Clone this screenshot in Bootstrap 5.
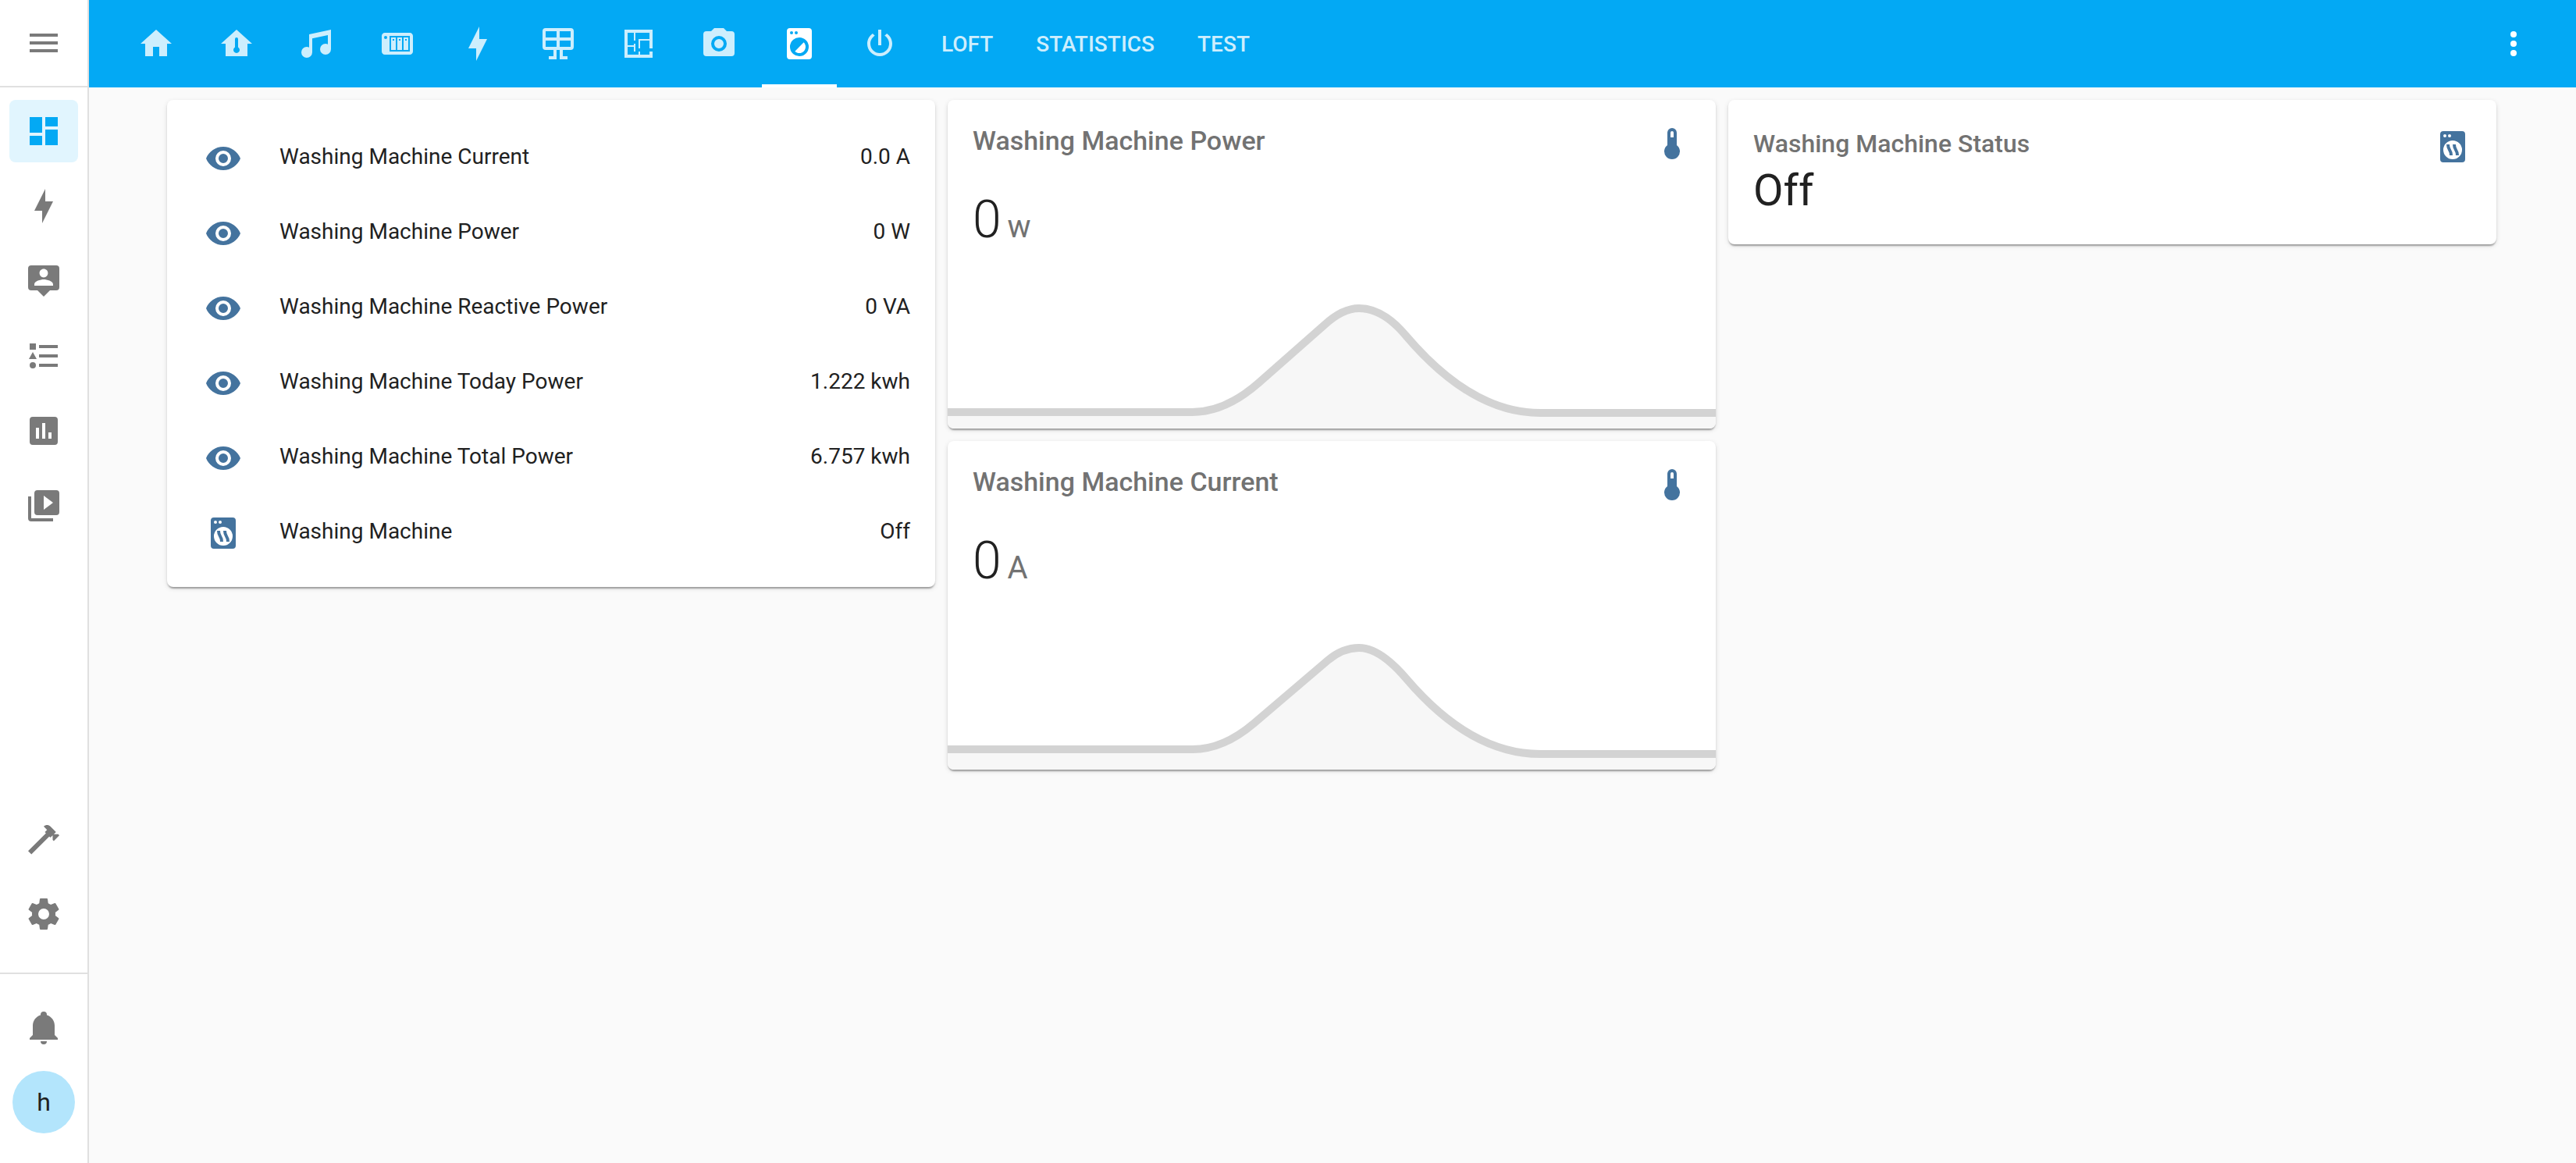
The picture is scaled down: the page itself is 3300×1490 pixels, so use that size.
<!DOCTYPE html>
<html lang="en">
<head>
<meta charset="utf-8">
<meta name="viewport" content="width=device-width, initial-scale=1">
<title>Washing Machine – Home Assistant</title>
<link href="https://cdn.jsdelivr.net/npm/bootstrap@5.3.0/dist/css/bootstrap.min.css" rel="stylesheet">
<style>
  :root { --accent: #03a9f4; --ink: #212121; --muted-ink: #727272; --line: #e0e0e0; --state: #44739e; }
  body { font-family: Roboto, "Noto Sans", sans-serif; font-size: 28px; line-height: 40px; color: var(--ink); background: #fafafa; }
  .ico { width: 48px; height: 48px; fill: currentColor; fill-rule: evenodd; flex: none; display: block; }
  .side { width: 114px; border-right: 2px solid var(--line); height: 100vh; color: #7a7a7a; }
  .side-head { height: 112px; border-bottom: 2px solid var(--line); }
  .side-list { padding: 16px 12px; gap: 16px; }
  .side-tools { padding-bottom: 35px; }
  .side-link { height: 80px; border-radius: 8px; color: inherit; }
  .side-link.active { background: #e1f5fe; color: var(--accent); }
  .side-foot { border-top: 2px solid var(--line); padding: 28px 12px 38px; gap: 16px; }
  .user-dot { width: 80px; height: 80px; background: #b3e5fc; color: var(--ink); font-size: 32px; }
  .topbar { height: 112px; background: var(--accent); padding: 0 56px 0 38px; }
  .tabs { gap: 7px; }
  .tab-link { height: 112px; padding: 4px 24px 0; border-bottom: 4px solid transparent; color: #cdeefd; font-weight: 500; text-decoration: none; }
  .tab-text { padding-top: 6px; }
  .plain-btn { background: none; border: 0; padding: 0; color: inherit; }
  .tab-link.active, .more-btn { color: #fff; }
  .tab-link.active { border-color: #fff; }
  .board { max-width: 3002px; padding: 16px 10px 16px 8px; gap: 16px; }
  .board-col { flex: 1 1 0; min-width: 0; gap: 16px; }
  .tile { border: 0; border-radius: 8px; overflow: hidden; color: var(--ink);
    box-shadow: 0 4px 2px -2px rgba(0,0,0,.2), 0 2px 2px 0 rgba(0,0,0,.14), 0 2px 6px 0 rgba(0,0,0,.12); }
  .entities { padding: 32px; gap: 16px; }
  .entity { height: 80px; padding-top: 2px; }
  .entity-ico { width: 80px; margin-right: 32px; padding-top: 4px; color: var(--state); }
  .sensor-head { padding: 32px 32px 0; }
  .tile-title { font-weight: 500; color: var(--muted-ink); font-size: 32px; line-height: 40px; margin: 0; }
  .sensor-head .tile-title { font-size: 34px; }
  .state-ico { color: var(--state); }
  .sensor-value { padding: 38px 32px 41px; font-size: 66px; line-height: 72px; font-weight: 300; }
  .sensor-unit { font-size: 40px; line-height: 40px; font-weight: 400; color: var(--muted-ink); margin-left: 8px; }
  .graph { display: block; width: 100%; height: auto; }
  .graph .area { fill: #f7f7f7; }
  .graph .trace { fill: none; stroke: #d3d3d3; stroke-width: 10; }
  .status { padding: 36px 32px 37px; }
  .status-value { font-size: 56px; line-height: 64px; margin-top: 8px; }
</style>
<script src="https://cdn.jsdelivr.net/npm/bootstrap@5.3.0/dist/js/bootstrap.bundle.min.js"></script>
</head>
<body>
<svg class="d-none" aria-hidden="true">
  <symbol id="i-menu" viewBox="0 0 24 24"><path d="M3,6H21V8H3V6M3,11H21V13H3V11M3,16H21V18H3V16Z"/></symbol>
  <symbol id="i-dashboard" viewBox="0 0 24 24"><path d="M13,3V9H21V3M13,21H21V11H13M3,21H11V15H3M3,13H11V3H3V13Z"/></symbol>
  <symbol id="i-flash" viewBox="0 0 24 24"><path d="M11 15H6L13 1V9H18L11 23V15Z"/></symbol>
  <symbol id="i-person" viewBox="0 0 24 24"><path d="M20,2H4A2,2 0 0,0 2,4V16A2,2 0 0,0 4,18H8L12,22L16,18H20A2,2 0 0,0 22,16V4A2,2 0 0,0 20,2M12,4.3C13.5,4.3 14.7,5.5 14.7,7C14.7,8.5 13.5,9.7 12,9.7C10.5,9.7 9.3,8.5 9.3,7C9.3,5.5 10.5,4.3 12,4.3M18,15H6V14.1C6,12.1 10,11 12,11C14,11 18,12.1 18,14.1V15Z"/></symbol>
  <symbol id="i-list" viewBox="0 0 24 24"><path d="M5,9.5L7.5,14H2.5L5,9.5M3,4H7V8H3V4M5,20A2,2 0 0,0 7,18A2,2 0 0,0 5,16A2,2 0 0,0 3,18A2,2 0 0,0 5,20M9,5V7H21V5H9M9,19H21V17H9V19M9,13H21V11H9V13Z"/></symbol>
  <symbol id="i-chart" viewBox="0 0 24 24"><path d="M9 17H7V10H9V17M13 17H11V7H13V17M17 17H15V13H17V17M19 3H5A2 2 0 0 0 3 5V19A2 2 0 0 0 5 21H19A2 2 0 0 0 21 19V5A2 2 0 0 0 19 3Z"/></symbol>
  <symbol id="i-media" viewBox="0 0 24 24"><path d="M4,6H2V20A2,2 0 0,0 4,22H18V20H4V6M20,2H8A2,2 0 0,0 6,4V16A2,2 0 0,0 8,18H20A2,2 0 0,0 22,16V4A2,2 0 0,0 20,2M12,14.5V5.5L18,10L12,14.5Z"/></symbol>
  <symbol id="i-hammer" viewBox="0 0 24 24"><path d="M2,19.63L13.43,8.2L12.72,7.5L14.14,6.07L12,3.89C13.2,2.7 15.09,2.7 16.27,3.89L19.87,7.5L18.45,8.91H21.29L22,9.62L18.45,13.21L17.74,12.5V9.62L16.27,11.04L15.56,10.33L4.13,21.76L2,19.63Z"/></symbol>
  <symbol id="i-cog" viewBox="0 0 24 24"><path d="M12,15.5A3.5,3.5 0 0,1 8.5,12A3.5,3.5 0 0,1 12,8.5A3.5,3.5 0 0,1 15.5,12A3.5,3.5 0 0,1 12,15.5M19.43,12.97C19.47,12.65 19.5,12.33 19.5,12C19.5,11.67 19.47,11.34 19.43,11L21.54,9.37C21.73,9.22 21.78,8.95 21.66,8.73L19.66,5.27C19.54,5.05 19.27,4.96 19.05,5.05L16.56,6.05C16.04,5.66 15.5,5.32 14.87,5.07L14.5,2.42C14.46,2.18 14.25,2 14,2H10C9.75,2 9.54,2.18 9.5,2.42L9.13,5.07C8.5,5.32 7.96,5.66 7.44,6.05L4.95,5.05C4.73,4.96 4.46,5.05 4.34,5.27L2.34,8.73C2.21,8.95 2.27,9.22 2.46,9.37L4.57,11C4.53,11.34 4.5,11.67 4.5,12C4.5,12.33 4.53,12.65 4.57,12.97L2.46,14.63C2.27,14.78 2.21,15.05 2.34,15.27L4.34,18.73C4.46,18.95 4.73,19.03 4.95,18.95L7.44,17.94C7.96,18.34 8.5,18.68 9.13,18.93L9.5,21.58C9.54,21.82 9.75,22 10,22H14C14.25,22 14.46,21.82 14.5,21.58L14.87,18.93C15.5,18.67 16.04,18.34 16.56,17.94L19.05,18.95C19.27,19.03 19.54,18.95 19.66,18.73L21.66,15.27C21.78,15.05 21.73,14.78 21.54,14.63L19.43,12.97Z"/></symbol>
  <symbol id="i-bell" viewBox="0 0 24 24"><path d="M21,19V20H3V19L5,17V11C5,7.9 7.03,5.17 10,4.29C10,4.19 10,4.1 10,4A2,2 0 0,1 12,2A2,2 0 0,1 14,4C14,4.1 14,4.19 14,4.29C16.97,5.17 19,7.9 19,11V17L21,19M14,21A2,2 0 0,1 12,23A2,2 0 0,1 10,21"/></symbol>
  <symbol id="i-home" viewBox="0 0 24 24"><path d="M10,20V14H14V20H19V12H22L12,3L2,12H5V20H10Z"/></symbol>
  <symbol id="i-home-temp" viewBox="0 0 24 24"><path d="M12 3L2 12H5V20H19V12H22L12 3M12 8A1 1 0 0 1 13 9V14.27A2 2 0 1 1 11 14.27V9A1 1 0 0 1 12 8Z"/></symbol>
  <symbol id="i-music" viewBox="0 0 24 24"><path d="M21,3V15.5A3.5,3.5 0 0,1 17.5,19A3.5,3.5 0 0,1 14,15.5A3.5,3.5 0 0,1 17.5,12C18.04,12 18.55,12.12 19,12.34V6.47L9,8.6V17.5A3.5,3.5 0 0,1 5.5,21A3.5,3.5 0 0,1 2,17.5A3.5,3.5 0 0,1 5.5,14C6.04,14 6.55,14.12 7,14.34V6L21,3Z"/></symbol>
  <symbol id="i-nas" viewBox="0 0 24 24"><path d="M4,5C2.89,5 2,5.89 2,7V17C2,18.11 2.89,19 4,19H20C21.11,19 22,18.11 22,17V7C22,5.89 21.11,5 20,5H4M4.5,7A1,1 0 0,1 5.5,8A1,1 0 0,1 4.5,9A1,1 0 0,1 3.5,8A1,1 0 0,1 4.5,7M7,7H20V17H7V7M8,8V16H11V8H8M12,8V16H15V8H12M16,8V16H19V8H16M9,9H10V10H9V9M13,9H14V10H13V9M17,9H18V10H17V9Z"/></symbol>
  <symbol id="i-solar" viewBox="0 0 24 24"><path d="M4,2H20A2,2 0 0,1 22,4V14A2,2 0 0,1 20,16H15V20H18V22H13V16H11V22H6V20H9V16H4A2,2 0 0,1 2,14V4A2,2 0 0,1 4,2M4,4V8H11V4H4M4,14H11V10H4V14M20,14V10H13V14H20M20,4H13V8H20V4Z"/></symbol>
  <symbol id="i-plan" viewBox="0 0 24 24"><path d="M10,5V10H9V5H5V13H9V12H10V17H9V14H5V19H12V17H13V19H19V17H21V21H3V3H21V15H19V10H13V15H12V9H19V5H10Z"/></symbol>
  <symbol id="i-camera" viewBox="0 0 24 24"><path d="M4,4H7L9,2H15L17,4H20A2,2 0 0,1 22,6V18A2,2 0 0,1 20,20H4A2,2 0 0,1 2,18V6A2,2 0 0,1 4,4M12,7A5,5 0 0,0 7,12A5,5 0 0,0 12,17A5,5 0 0,0 17,12A5,5 0 0,0 12,7M12,9A3,3 0 0,1 15,12A3,3 0 0,1 12,15A3,3 0 0,1 9,12A3,3 0 0,1 12,9Z"/></symbol>
  <symbol id="i-washer" viewBox="0 0 24 24"><path d="M14.83,11.17C16.39,12.73 16.39,15.26 14.83,16.83C13.27,18.39 10.74,18.39 9.17,16.83L14.83,11.17M6,2H18A2,2 0 0,1 20,4V20A2,2 0 0,1 18,22H6A2,2 0 0,1 4,20V4A2,2 0 0,1 6,2M7,4A1,1 0 0,0 6,5A1,1 0 0,0 7,6A1,1 0 0,0 8,5A1,1 0 0,0 7,4M10,4A1,1 0 0,0 9,5A1,1 0 0,0 10,6A1,1 0 0,0 11,5A1,1 0 0,0 10,4M12,8A6,6 0 0,0 6,14A6,6 0 0,0 12,20A6,6 0 0,0 18,14A6,6 0 0,0 12,8Z"/></symbol>
  <symbol id="i-dryer" viewBox="0 0 24 24"><path d="M6,2H18A2,2 0 0,1 20,4V20A2,2 0 0,1 18,22H6A2,2 0 0,1 4,20V4A2,2 0 0,1 6,2M7,4A1,1 0 0,0 6,5A1,1 0 0,0 7,6A1,1 0 0,0 8,5A1,1 0 0,0 7,4M10,4A1,1 0 0,0 9,5A1,1 0 0,0 10,6A1,1 0 0,0 11,5A1,1 0 0,0 10,4M12,8A6,6 0 0,0 6,14A6,6 0 0,0 12,20A6,6 0 0,0 18,14A6,6 0 0,0 12,8Z"/><path d="M9 10.5C9 14.5 11 13.5 11 17.5M13 10.5C13 14.5 15 13.5 15 17.5" fill="none" stroke="currentColor" stroke-width="2"/></symbol>
  <symbol id="i-power" viewBox="0 0 24 24"><path d="M16.56,5.44L15.11,6.89C16.84,7.94 18,9.83 18,12A6,6 0 0,1 12,18A6,6 0 0,1 6,12C6,9.83 7.16,7.94 8.88,6.88L7.44,5.44C5.36,6.88 4,9.28 4,12A8,8 0 0,0 12,20A8,8 0 0,0 20,12C20,9.28 18.64,6.88 16.56,5.44M13,3H11V13H13"/></symbol>
  <symbol id="i-dots" viewBox="0 0 24 24"><circle cx="12" cy="6" r="2"/><circle cx="12" cy="12" r="2"/><circle cx="12" cy="18" r="2"/></symbol>
  <symbol id="i-eye" viewBox="0 0 24 24"><path d="M12,9A3,3 0 0,0 9,12A3,3 0 0,0 12,15A3,3 0 0,0 15,12A3,3 0 0,0 12,9M12,17A5,5 0 0,1 7,12A5,5 0 0,1 12,7A5,5 0 0,1 17,12A5,5 0 0,1 12,17M12,4.5C7,4.5 2.73,7.61 1,12C2.73,16.39 7,19.5 12,19.5C17,19.5 21.27,16.39 23,12C21.27,7.61 17,4.5 12,4.5Z"/></symbol>
  <symbol id="i-temp" viewBox="0 0 24 24"><path d="M15 13V5A3 3 0 0 0 9 5V13A5 5 0 1 0 15 13M12 4A1 1 0 0 1 13 5V8H11V5A1 1 0 0 1 12 4Z"/></symbol>
</svg>

<div class="d-flex min-vh-100">
  <aside class="side bg-white d-flex flex-column flex-shrink-0 sticky-top">
    <div class="side-head d-flex align-items-center justify-content-center flex-shrink-0">
      <button class="plain-btn" type="button" aria-label="Toggle sidebar"><svg class="ico"><use href="#i-menu"/></svg></button>
    </div>
    <nav class="side-list nav flex-column flex-nowrap flex-grow-1" aria-label="Panels">
      <a class="side-link active d-flex align-items-center justify-content-center" href="#" aria-label="Overview"><svg class="ico"><use href="#i-dashboard"/></svg></a>
      <a class="side-link d-flex align-items-center justify-content-center" href="#" aria-label="Energy"><svg class="ico"><use href="#i-flash"/></svg></a>
      <a class="side-link d-flex align-items-center justify-content-center" href="#" aria-label="Map"><svg class="ico"><use href="#i-person"/></svg></a>
      <a class="side-link d-flex align-items-center justify-content-center" href="#" aria-label="Logbook"><svg class="ico"><use href="#i-list"/></svg></a>
      <a class="side-link d-flex align-items-center justify-content-center" href="#" aria-label="History"><svg class="ico"><use href="#i-chart"/></svg></a>
      <a class="side-link d-flex align-items-center justify-content-center" href="#" aria-label="Media"><svg class="ico"><use href="#i-media"/></svg></a>
    </nav>
    <nav class="side-list side-tools nav flex-column flex-nowrap" aria-label="Tools">
      <a class="side-link d-flex align-items-center justify-content-center" href="#" aria-label="Developer tools"><svg class="ico"><use href="#i-hammer"/></svg></a>
      <a class="side-link d-flex align-items-center justify-content-center" href="#" aria-label="Settings"><svg class="ico"><use href="#i-cog"/></svg></a>
    </nav>
    <div class="side-foot d-flex flex-column align-items-center">
      <a class="side-link d-flex align-items-center" href="#" aria-label="Notifications"><svg class="ico"><use href="#i-bell"/></svg></a>
      <a class="user-dot rounded-circle d-flex align-items-center justify-content-center text-decoration-none" href="#" aria-label="Profile">h</a>
    </div>
  </aside>

  <div class="flex-grow-1">
    <header class="topbar d-flex align-items-center justify-content-between">
      <nav class="tabs nav flex-nowrap" aria-label="Views">
        <a class="tab-link d-flex align-items-center" href="#" aria-label="Home"><svg class="ico"><use href="#i-home"/></svg></a>
        <a class="tab-link d-flex align-items-center" href="#" aria-label="Climate"><svg class="ico"><use href="#i-home-temp"/></svg></a>
        <a class="tab-link d-flex align-items-center" href="#" aria-label="Music"><svg class="ico"><use href="#i-music"/></svg></a>
        <a class="tab-link d-flex align-items-center" href="#" aria-label="Storage"><svg class="ico"><use href="#i-nas"/></svg></a>
        <a class="tab-link d-flex align-items-center" href="#" aria-label="Electricity"><svg class="ico"><use href="#i-flash"/></svg></a>
        <a class="tab-link d-flex align-items-center" href="#" aria-label="Solar"><svg class="ico"><use href="#i-solar"/></svg></a>
        <a class="tab-link d-flex align-items-center" href="#" aria-label="Floor plan"><svg class="ico"><use href="#i-plan"/></svg></a>
        <a class="tab-link d-flex align-items-center" href="#" aria-label="Cameras"><svg class="ico"><use href="#i-camera"/></svg></a>
        <a class="tab-link active d-flex align-items-center" href="#" aria-label="Washing machine" aria-current="page"><svg class="ico"><use href="#i-washer"/></svg></a>
        <a class="tab-link d-flex align-items-center" href="#" aria-label="Power"><svg class="ico"><use href="#i-power"/></svg></a>
        <a class="tab-link tab-text d-flex align-items-center" href="#">LOFT</a>
        <a class="tab-link tab-text d-flex align-items-center" href="#">STATISTICS</a>
        <a class="tab-link tab-text d-flex align-items-center" href="#">TEST</a>
      </nav>
      <button class="plain-btn more-btn" type="button" aria-label="More options"><svg class="ico"><use href="#i-dots"/></svg></button>
    </header>

    <main class="board d-flex align-items-start mx-auto">
      <div class="board-col d-flex flex-column">
        <section class="tile card entities">
          <div class="entity d-flex align-items-center"><span class="entity-ico d-flex justify-content-center"><svg class="ico"><use href="#i-eye"/></svg></span><span class="flex-grow-1">Washing Machine Current</span><span>0.0 A</span></div>
          <div class="entity d-flex align-items-center"><span class="entity-ico d-flex justify-content-center"><svg class="ico"><use href="#i-eye"/></svg></span><span class="flex-grow-1">Washing Machine Power</span><span>0 W</span></div>
          <div class="entity d-flex align-items-center"><span class="entity-ico d-flex justify-content-center"><svg class="ico"><use href="#i-eye"/></svg></span><span class="flex-grow-1">Washing Machine Reactive Power</span><span>0 VA</span></div>
          <div class="entity d-flex align-items-center"><span class="entity-ico d-flex justify-content-center"><svg class="ico"><use href="#i-eye"/></svg></span><span class="flex-grow-1">Washing Machine Today Power</span><span>1.222 kwh</span></div>
          <div class="entity d-flex align-items-center"><span class="entity-ico d-flex justify-content-center"><svg class="ico"><use href="#i-eye"/></svg></span><span class="flex-grow-1">Washing Machine Total Power</span><span>6.757 kwh</span></div>
          <div class="entity d-flex align-items-center"><span class="entity-ico d-flex justify-content-center"><svg class="ico"><use href="#i-dryer"/></svg></span><span class="flex-grow-1">Washing Machine</span><span>Off</span></div>
        </section>
      </div>

      <div class="board-col d-flex flex-column">
        <section class="tile card">
          <div class="sensor-head d-flex justify-content-between"><h2 class="tile-title">Washing Machine Power</h2><svg class="ico state-ico"><use href="#i-temp"/></svg></div>
          <div class="sensor-value d-flex align-items-baseline"><span>0</span><span class="sensor-unit">w</span></div>
          <svg class="graph" viewBox="0 0 984 190" role="img" aria-label="Power over the last day">
            <path class="area" d="M0 169H313Q356 169 399 131L483 57Q506 36 527 36Q558 36 587 71Q671 170 759 170H984V190H0Z"/>
            <path class="trace" d="M0 169H313Q356 169 399 131L483 57Q506 36 527 36Q558 36 587 71Q671 170 759 170H984"/>
          </svg>
        </section>
        <section class="tile card">
          <div class="sensor-head d-flex justify-content-between"><h2 class="tile-title">Washing Machine Current</h2><svg class="ico state-ico"><use href="#i-temp"/></svg></div>
          <div class="sensor-value d-flex align-items-baseline"><span>0</span><span class="sensor-unit">A</span></div>
          <svg class="graph" viewBox="0 0 984 190" role="img" aria-label="Current over the last day">
            <path class="area" d="M0 164H314Q353 164 392 131L487 50Q506 34 527 34Q554 34 588 74Q670 170 759 170H984V190H0Z"/>
            <path class="trace" d="M0 164H314Q353 164 392 131L487 50Q506 34 527 34Q554 34 588 74Q670 170 759 170H984"/>
          </svg>
        </section>
      </div>

      <div class="board-col d-flex flex-column">
        <section class="tile card status">
          <div class="d-flex justify-content-between align-items-start">
            <div><h2 class="tile-title">Washing Machine Status</h2><div class="status-value">Off</div></div>
            <svg class="ico state-ico"><use href="#i-dryer"/></svg>
          </div>
        </section>
      </div>
    </main>
  </div>
</div>
</body>
</html>
